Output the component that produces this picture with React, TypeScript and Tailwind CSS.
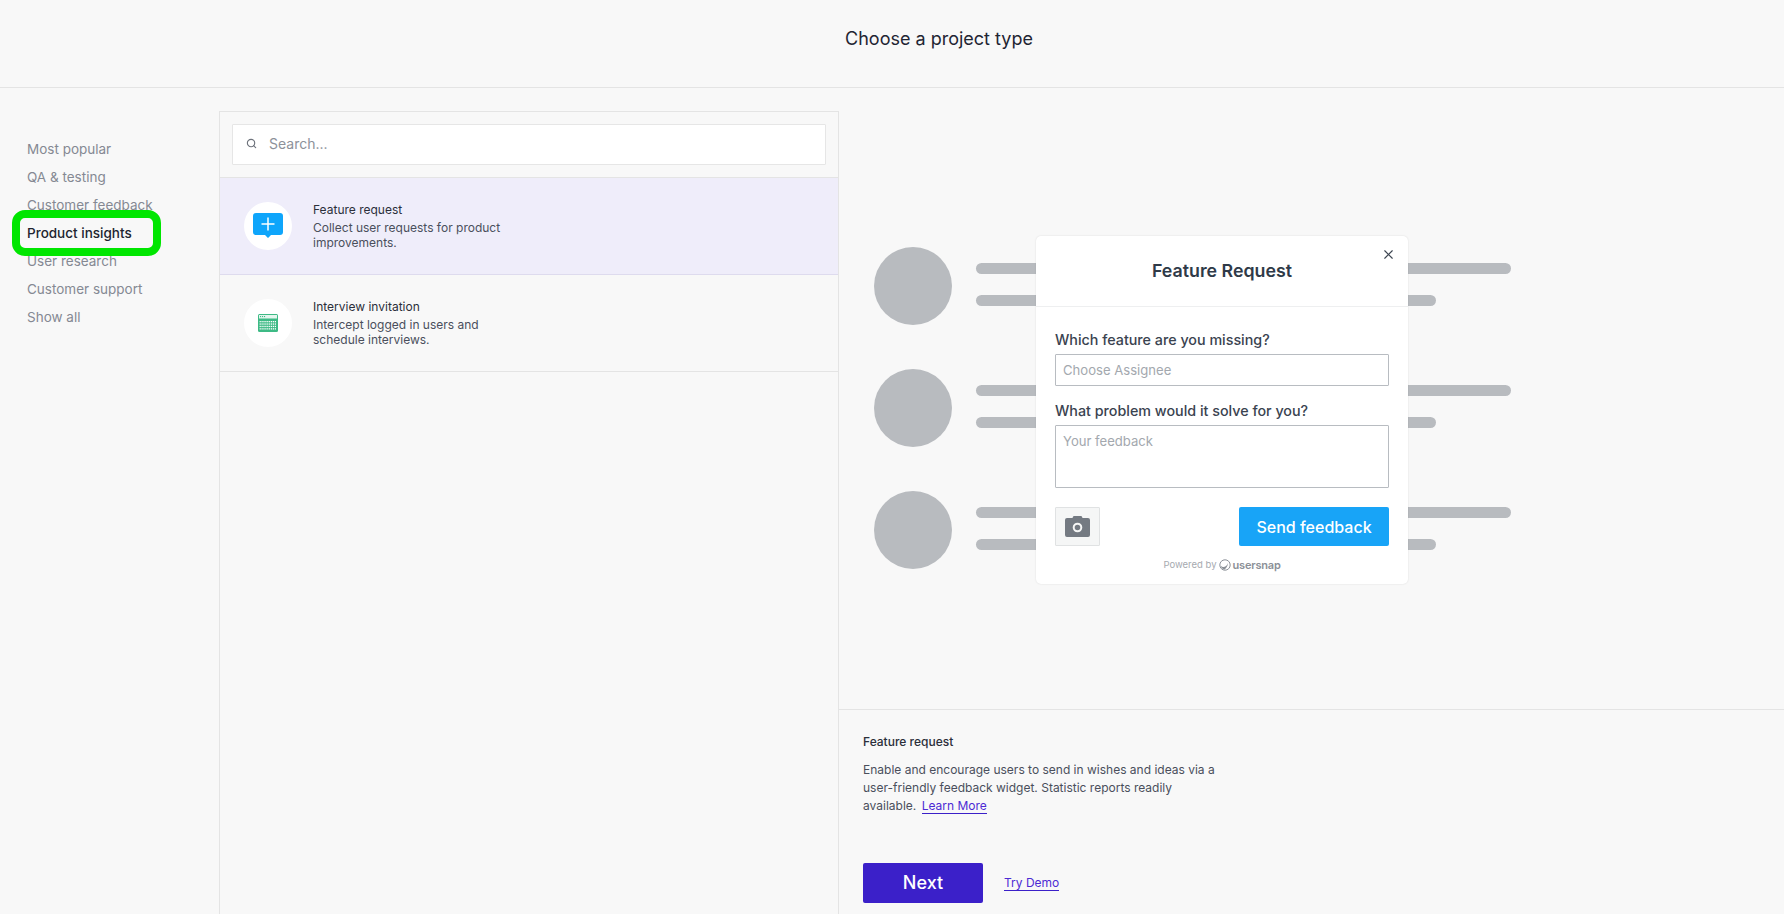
import { Search, X } from 'lucide-react';

const categories = ['Most popular', 'QA & testing', 'Customer feedback', 'Product insights', 'User research', 'Customer support', 'Show all'];

function FeatureIcon() {
    return (
        <svg width="30" height="26" viewBox="0 0 30 26">
            <path d="M3 0h24a3 3 0 0 1 3 3v16a3 3 0 0 1-3 3H18l-3 3-3-3H3a3 3 0 0 1-3-3V3a3 3 0 0 1 3-3z" fill="#0ea5fb" />
            <path d="M15 4.500v13M8.500 11h13" stroke="#fff" strokeWidth="1.500" />
        </svg>
    );
}

function CalendarIcon() {
    const dots = [];
    for (let r = 0; r < 4; r++) {
        for (let c = 0; c < 9; c++) {
            dots.push(<rect key={`${r}-${c}`} x={1.6 + c * 1.9} y={7 + r * 2.4} width="1.200" height="1.300" fill="#fff" />);
        }
    }
    return (
        <svg width="20" height="18" viewBox="0 0 20 18">
            <rect width="20" height="18" rx="1.500" fill="#3dba85" />
            <rect x="1" y="1" width="18" height="3.500" fill="#e4f6ee" />
            <rect x="2" y="2" width="1.100" height="1.100" fill="#3dba85" />
            <rect x="4" y="2" width="1.100" height="1.100" fill="#3dba85" />
            <rect x="6" y="2" width="1.100" height="1.100" fill="#3dba85" />
            {dots}
        </svg>
    );
}

function CameraIcon() {
    return (
        <svg width="25" height="21" viewBox="0 0 25 21">
            <path d="M2 2h5.500l.5-1.200A1.200 1.200 0 0 1 9 0h7a1.200 1.200 0 0 1 1 .8l.5 1.200H23a2 2 0 0 1 2 2v15a2 2 0 0 1-2 2H2a2 2 0 0 1-2-2V4a2 2 0 0 1 2-2z" fill="#747a82" />
            <circle cx="12.500" cy="11.500" r="3.800" fill="none" stroke="#f5f6f6" strokeWidth="2" />
        </svg>
    );
}

function UsersnapMark() {
    return (
        <svg width="12" height="12" viewBox="0 0 12 12" fill="none">
            <circle cx="6" cy="6" r="5.200" stroke="#8b9097" strokeWidth="1" />
            <path d="M1.500 6.500c2 2.500 6 2 7.500-2.500-.2 3-2 5.500-3.500 6.500-2-.2-3.500-2-4-4z" fill="#8b9097" />
        </svg>
    );
}

function ProjectRow({ title, lines, active, icon }: { title: string; lines: string[]; active?: boolean; icon: React.ReactNode }) {
    return (
        <div className={`flex h-[97px] items-center border-b pl-6 ${active ? 'border-[#dedbee] bg-[#efedfa]' : 'border-[#e4e4e4]'}`}>
            <div className="flex h-12 w-12 shrink-0 items-center justify-center rounded-full bg-white">{icon}</div>
            <div className="ml-[21px] text-[12px] leading-[15px] text-[#4a4f5c]">
                <div className="mb-[3px] text-[#2b2f3a]">{title}</div>
                {lines.map((line) => (
                    <div key={line}>{line}</div>
                ))}
            </div>
        </div>
    );
}

function PlaceholderRow() {
    return (
        <div className="flex h-[78px] items-center">
            <div className="h-[78px] w-[78px] rounded-full bg-[#b8bbbf]" />
            <div className="ml-6 flex flex-col gap-[21px] pb-[4px]">
                <div className="h-[11px] w-[535px] rounded-full bg-[#b8bbbf]" />
                <div className="h-[11px] w-[460px] rounded-full bg-[#b8bbbf]" />
            </div>
        </div>
    );
}

function FeedbackWidget() {
    return (
        <div className="absolute left-[197px] top-[148px] h-[348px] w-[372px] rounded-[5px] bg-white font-['Inter',sans-serif] shadow-[0_0_2px_rgba(0,0,0,0.12)]">
            <div className="relative flex h-[71px] items-center justify-center border-b border-[#eeeff0] pt-[1px] text-[17.800px] font-semibold text-[#2f3a48]">
                Feature Request
                <X className="absolute right-[12px] top-[11px] h-[15px] w-[15px] text-[#3c4450]" strokeWidth={1.800} />
            </div>
            <div className="px-[19px]">
                <div className="mt-[23px] text-[14.300px] font-medium leading-[20px] text-[#3a4350]">Which feature are you missing?</div>
                <div className="mt-[4px] flex h-[32px] items-center rounded-[1px] border border-[#b8bcc1] px-[7px] pt-[2px] text-[13.100px] text-[#a3a8ae]">Choose Assignee</div>
                <div className="mt-[15px] text-[14.300px] font-medium leading-[20px] text-[#3a4350]">What problem would it solve for you?</div>
                <div className="mt-[4px] h-[63px] rounded-[1px] border border-[#b8bcc1] px-[7px] py-[5px] text-[13.100px] leading-[20px] text-[#a3a8ae]">Your feedback</div>
                <div className="mt-[19px] flex items-center justify-between">
                    <div className="flex h-[39px] w-[45px] items-center justify-center rounded-[1px] border border-[#e0e2e3] bg-[#f5f6f6]">
                        <CameraIcon />
                    </div>
                    <div className="flex h-[39px] w-[150px] items-center justify-center rounded-[2px] bg-[#18a4f7] text-[16px] font-medium text-white">Send feedback</div>
                </div>
                <div className="mt-[11px] flex items-center justify-center text-[9.500px] text-[#a6aaaf]">
                    Powered by
                    <span className="mx-[2px] flex"><UsersnapMark /></span>
                    <span className="text-[11px] font-semibold tracking-[-0.2px] text-[#8b9097]">usersnap</span>
                </div>
            </div>
        </div>
    );
}

export default function App() {
    return (
        <div className="flex h-[914px] flex-col overflow-hidden bg-[#f8f8f8] font-['Inter',sans-serif]">
            <header className="flex h-[88px] shrink-0 items-center justify-center border-b border-[#e4e4e4] pb-[11px] pl-[94px] text-[18px] text-[#1f2533]">
                Choose a project type
            </header>

            <div className="flex min-h-0 flex-1">
                <nav className="w-[219px] shrink-0 pl-[27px] pt-[47px]">
                    {categories.map((item) => {
                        const isActive = item === 'Product insights';
                        return (
                            <div key={item} className={`relative h-[28px] text-[13.500px] leading-[28px] ${isActive ? 'z-10 font-medium text-[#20242f]' : 'text-[#858993]'}`}>
                                {isActive && (
                                    <div className="absolute -top-[9px] -left-[15px] -z-10 h-[46px] w-[149px] rounded-[13px] border-[8px] border-[#00e600] bg-[#f8f8f8]" />
                                )}
                                {item}
                            </div>
                        );
                    })}
                </nav>

                <section className="mt-[23px] w-[620px] shrink-0 border-x border-t border-[#e4e4e4]">
                    <div className="border-b border-[#e4e4e4] p-[12px] pb-[12px]">
                        <div className="flex h-[41px] w-[594px] items-center rounded-[1px] border border-[#e6e6e6] bg-white pb-[2px] pl-[13px] text-[14px] text-[#8d919a]">
                            <Search className="h-[11px] w-[11px] text-[#6e737c]" strokeWidth={2.500} />
                            <span className="ml-[12px]">Search...</span>
                        </div>
                    </div>
                    <ProjectRow active title="Feature request" lines={['Collect user requests for product', 'improvements.']} icon={<FeatureIcon />} />
                    <ProjectRow title="Interview invitation" lines={['Intercept logged in users and', 'schedule interviews.']} icon={<CalendarIcon />} />
                </section>

                <div className="flex min-w-0 flex-1 flex-col">
                    <div className="relative h-[622px] shrink-0 border-b border-[#e4e4e4]">
                        <div className="flex flex-col gap-[44px] pl-[35px] pt-[159px]">
                            <PlaceholderRow />
                            <PlaceholderRow />
                            <PlaceholderRow />
                        </div>
                        <FeedbackWidget />
                    </div>
                    <div className="pl-6 pt-[23px] text-[12px] leading-[18px] text-[#4a4f5c]">
                        <div className="font-medium text-[#2b2f3a]">Feature request</div>
                        <p className="mt-[10px]">
                            Enable and encourage users to send in wishes and ideas via a
                            <br />
                            user-friendly feedback widget. Statistic reports readily
                            <br />
                            available.&nbsp;
                            <a className="ml-[2px] border-b border-[#3b20c9] text-[#4d2bd4]">Learn More</a>
                        </p>
                        <div className="mt-[48px] flex items-center">
                            <button type="button" className="h-[40px] w-[120px] rounded-[2px] bg-[#3b20c9] text-[18px] font-medium text-white">Next</button>
                            <a className="ml-[21px] border-b border-[#3b20c9] text-[12px] leading-[15px] text-[#4d2bd4]">Try Demo</a>
                        </div>
                    </div>
                </div>
            </div>
        </div>
    );
}
